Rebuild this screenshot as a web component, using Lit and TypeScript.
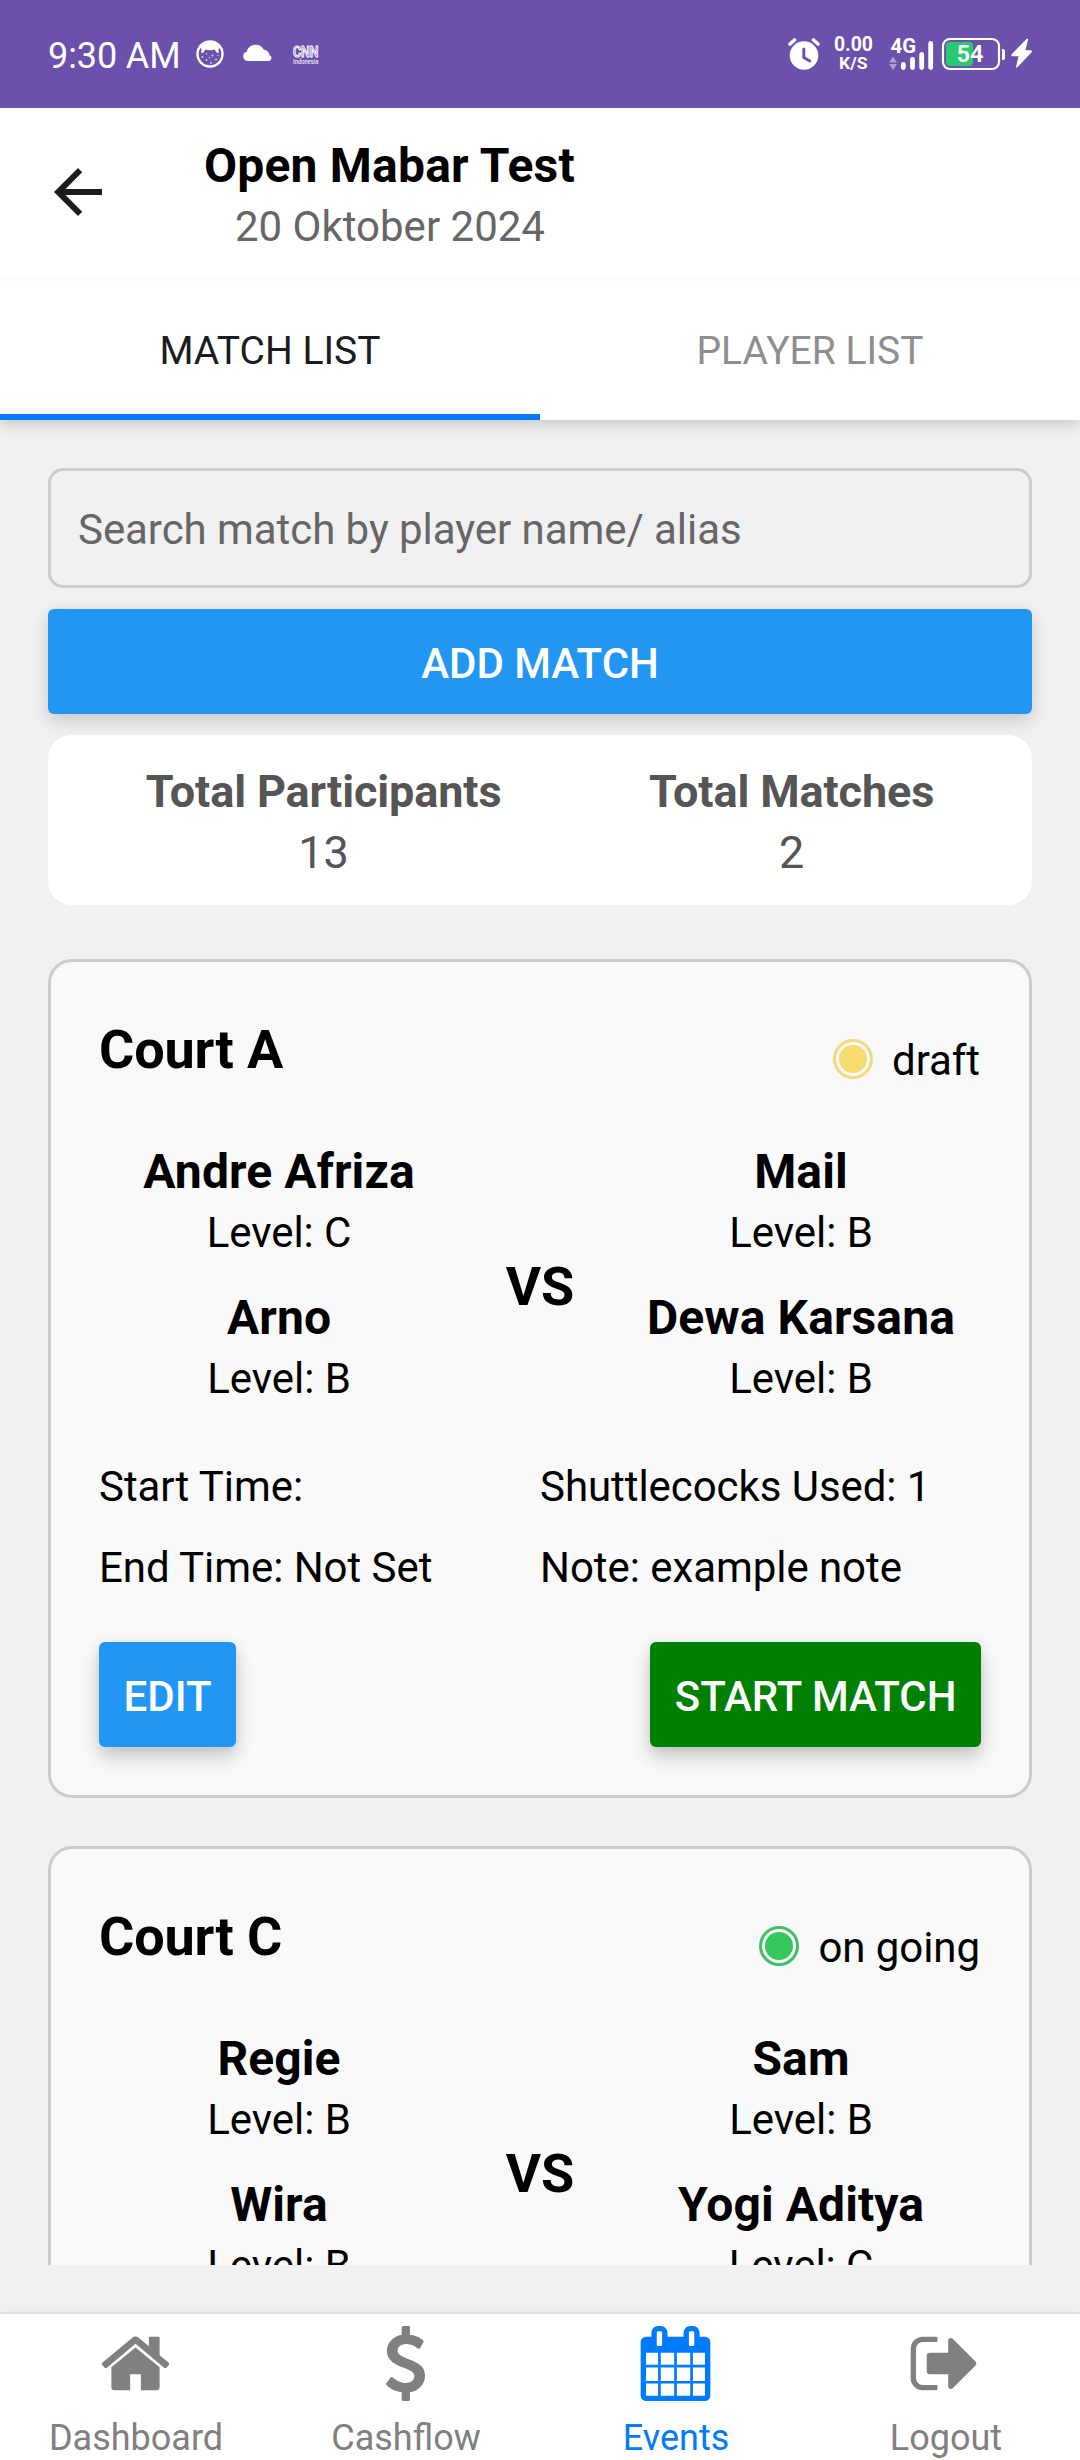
import { LitElement, html, css, svg, nothing } from "lit";
import { customElement, property } from "lit/decorators.js";
import { classMap } from "lit/directives/class-map.js";

interface Player {
  name: string;
  level: string;
}

interface Details {
  start: string;
  end: string;
  shuttlecocks: number;
  note: string;
}

interface Match {
  court: string;
  status: string;
  tone: "draft" | "ongoing";
  left: Player[];
  right: Player[];
  details?: Details;
}

const MATCHES: Match[] = [
  {
    court: "Court A",
    status: "draft",
    tone: "draft",
    left: [{ name: "Andre Afriza", level: "C" }, { name: "Arno", level: "B" }],
    right: [{ name: "Mail", level: "B" }, { name: "Dewa Karsana", level: "B" }],
    details: { start: "", end: "Not Set", shuttlecocks: 1, note: "example note" },
  },
  {
    court: "Court C",
    status: "on going",
    tone: "ongoing",
    left: [{ name: "Regie", level: "B" }, { name: "Wira", level: "B" }],
    right: [{ name: "Sam", level: "B" }, { name: "Yogi Aditya", level: "C" }],
  },
];

const NAV_ICONS: Record<string, string> = {
  home: "M1472 992v480q0 26-19 45t-45 19h-384v-384h-256v384h-384q-26 0-45-19t-19-45v-480q0-1 .5-3t.5-3l575-474 575 474q1 2 1 6zm223-69l-62 74q-8 9-21 11h-3q-13 0-21-7l-692-577-692 577q-12 8-24 7-13-2-21-11l-62-74q-8-10-7-23.5t11-21.5l719-599q32-26 76-26t76 26l244 204v-195q0-14 9-23t23-9h192q14 0 23 9t9 23v408l219 182q10 8 11 21.5t-7 23.5z",
  dollar: "M1362 1185q0 153-99.5 263.5t-258.5 136.5v175q0 14-9 23t-23 9h-135q-13 0-22.5-9.5t-9.5-22.5v-175q-66-9-127.5-31t-101.5-44.5-74-48-46.5-37.5-17.5-18q-17-21-2-41l103-135q7-10 23-12 15-2 24 9l2 2q113 99 243 125 37 8 74 8 81 0 142.5-43t61.5-122q0-28-15-53t-33.5-42-58.5-37.5-66-32-80-32.5q-39-16-61.5-25t-61.5-26.5-62.5-31-56.5-35.5-53.5-42.5-43.5-49-35.5-58-21-66.5-8.5-78q0-138 98-242t255-134v-180q0-13 9.5-22.5t22.5-9.5h135q14 0 23 9t9 23v176q57 6 110.5 23t87 33.5 63.5 37.5 39 29 15 14q17 18 5 38l-81 146q-8 15-23 16-14 3-27-7-3-3-14.5-12t-39-26.5-58.5-32-74.5-26-85.5-11.5q-95 0-155 43t-60 111q0 26 8.5 48t29.5 41.5 39.5 33 56 31 60.5 27 70 27.5q53 20 81 31.5t76 35 75.5 42.5 62 50 53 63.5 31.5 76.5 13 94z",
  calendar: "M192 1664h288v-288h-288v288zm352 0h320v-288h-320v288zm-352-352h288v-320h-288v320zm352 0h320v-320h-320v320zm-352-384h288v-288h-288v288zm736 736h320v-288h-320v288zm-384-736h320v-288h-320v288zm768 736h288v-288h-288v288zm-384-352h320v-320h-320v320zm-352-864v-288q0-13-9.5-22.5t-22.5-9.5h-64q-13 0-22.5 9.5t-9.5 22.5v288q0 13 9.5 22.5t22.5 9.5h64q13 0 22.5-9.5t9.5-22.5zm736 864h288v-320h-288v320zm-384-384h320v-288h-320v288zm384 0h288v-288h-288v288zm32-480v-288q0-13-9.5-22.5t-22.5-9.5h-64q-13 0-22.5 9.5t-9.5 22.5v288q0 13 9.5 22.5t22.5 9.5h64q13 0 22.5-9.5t9.5-22.5zm384-64v1280q0 52-38 90t-90 38h-1408q-52 0-90-38t-38-90v-1280q0-52 38-90t90-38h128v-96q0-66 47-113t113-47h64q66 0 113 47t47 113v96h384v-96q0-66 47-113t113-47h64q66 0 113 47t47 113v96h128q52 0 90 38t38 90z",
  signout: "M704 1440q0 4 1 20t.5 26.5-3 23.5-10 19.5-20.5 6.5h-320q-119 0-203.5-84.5t-84.5-203.5v-704q0-119 84.5-203.5t203.5-84.5h320q13 0 22.5 9.5t9.5 22.5q0 4 1 20t.5 26.5-3 23.5-10 19.5-20.5 6.5h-320q-66 0-113 47t-47 113v704q0 66 47 113t113 47h312l11.5 1 11.5 3 8 5.5 7 9 2 13.5zm928-544q0 26-19 45l-544 544q-19 19-45 19t-45-19-19-45v-288h-448q-26 0-45-19t-19-45v-384q0-26 19-45t45-19h448v-288q0-26 19-45t45-19 45 19l544 544q19 19 19 45z",
};

@customElement("status-bar")
class StatusBar extends LitElement {
  static styles = css`
    :host {
      display: flex;
      align-items: flex-start;
      justify-content: space-between;
      height: 108px;
      background: #6b51ab;
      color: #fff;
    }
    .side {
      display: flex;
      align-items: flex-start;
    }
    .clock {
      margin: 35px 0 0 48px;
      width: 142px;
      font-size: 36px;
      line-height: 42px;
      letter-spacing: -0.1px;
      white-space: nowrap;
    }
    svg {
      display: block;
      overflow: visible;
    }
    text {
      font-family: Roboto, sans-serif;
      fill: #fff;
    }
    .cnn {
      font-size: 15.500px;
      font-weight: 500;
      fill: #6b51ab;
      stroke: #fff;
      stroke-width: 1.1px;
    }
    .indo {
      font-size: 6.6px;
      font-weight: 500;
      opacity: 0.85;
    }
    .rate {
      font-size: 20.500px;
      font-weight: 700;
    }
    .unit {
      font-size: 17px;
      font-weight: 700;
    }
    .net {
      font-size: 21px;
      font-weight: 700;
    }
    .level {
      font-size: 23.500px;
      font-weight: 600;
    }
  `;

  render() {
    return html`
      <div class="side">
        <span class="clock">9:30 AM</span>
        <svg width="140" height="108" viewBox="190 0 140 108">
          <circle cx="210" cy="54" r="12.5" fill="none" stroke="#fff" stroke-width="2.4" />
          <path d="M199.500 47Q203 41 210 41T220.500 47L218.500 49L218.800 53L216.500 52.500L214.500 49.500Q210 51 205.500 49.500L203.500 52.500L201.200 53L201.500 49Z" fill="#fff" />
          <g fill="#fff" opacity=".75">
            <circle cx="202.500" cy="57" r=".9" /><circle cx="206.500" cy="60" r=".9" />
            <circle cx="212.500" cy="55.500" r=".9" /><circle cx="216" cy="59.500" r=".9" />
            <circle cx="211" cy="63" r=".9" /><circle cx="206.500" cy="54" r=".7" />
            <circle cx="218" cy="55.500" r=".7" /><circle cx="209.500" cy="57.500" r=".7" />
          </g>
          <path d="M247.500 61a4.700 4.700 0 0 1-.8-9.200a9.200 9.200 0 0 1 17.200-2a6.400 6.400 0 0 1 5.600 5.400a3 3 0 0 1-.4 5.800z" fill="#fff" />
          <text class="cnn" x="293" y="56.800" textLength="25.5" lengthAdjust="spacingAndGlyphs">CNN</text>
          <text class="indo" x="293" y="63.800" textLength="25.5" lengthAdjust="spacingAndGlyphs">Indonesia</text>
        </svg>
      </div>
      <svg width="300" height="108" viewBox="780 0 300 108">
        <g>
          <circle cx="804" cy="55.500" r="14.300" fill="#fff" />
          <path d="M790 44l4.500-4M818 44l-4.500-4" stroke="#fff" stroke-width="3.600" stroke-linecap="round" />
          <path d="M803.800 49v8.500l6 3.500" fill="none" stroke="#6b51ab" stroke-width="3" stroke-linecap="round" stroke-linejoin="round" />
        </g>
        <text class="rate" x="834" y="51" textLength="39" lengthAdjust="spacingAndGlyphs">0.00</text>
        <text class="unit" x="839" y="69" textLength="28.5" lengthAdjust="spacingAndGlyphs">K/S</text>
        <text class="net" x="890.500" y="53" textLength="25.5" lengthAdjust="spacingAndGlyphs">4G</text>
        <path d="M893 56.500l4 6h-8zM893 70l4-6h-8z" fill="#fff" opacity=".45" />
        <path d="M903.300 64.500v3M912.500 59.500v8M921.700 54.500v13M930.700 43.500v24" stroke="#fff" stroke-width="4.800" stroke-linecap="round" />
        <rect x="943" y="39" width="56" height="30" rx="7" fill="none" stroke="#fff" stroke-width="2.200" />
        <rect x="946" y="42" width="27" height="24" rx="4" fill="#2cca6e" />
        <text class="level" x="956.500" y="62">54</text>
        <path d="M1002 49q3 0 3 2v7q0 2-3 2z" fill="#fff" />
        <path d="M1027 38.500L1011.500 54.500q-.8 1.500 1 1.800h6L1016 67l1 .8L1031.800 52q.6-1.600-1-1.800h-5.300L1028.200 39z" fill="#fff" />
      </svg>
    `;
  }
}

@customElement("match-card")
class MatchCard extends LitElement {
  @property({ attribute: false }) match!: Match;

  static styles = css`
    :host {
      display: block;
      box-sizing: border-box;
      flex: none;
      height: 839px;
      padding: 48px;
      border: 3px solid #ccc;
      border-radius: 24px;
      background: #f9f9f9;
      color: #000;
      font-size: 42px;
      line-height: 57px;
      letter-spacing: -0.06px;
    }
    .head {
      display: flex;
      justify-content: space-between;
      align-items: flex-start;
      height: 129px;
    }
    .court {
      padding-top: 4px;
      font-size: 54px;
      line-height: 72px;
      font-weight: 700;
      letter-spacing: -0.15px;
    }
    .status {
      display: flex;
      align-items: center;
      gap: 19px;
      padding: 22px 1px 0 0;
    }
    .dot {
      box-sizing: border-box;
      width: 40px;
      height: 40px;
      margin-top: -3px;
      padding: 3px;
      border: 3.500px solid #f1db81;
      border-radius: 50%;
      background-clip: content-box;
      background-color: #f6db6e;
    }
    .dot.ongoing {
      border-color: #41c065;
      background-color: #34c759;
    }
    .teams {
      display: grid;
      grid-template-columns: 360px 162px 360px;
      align-items: center;
      height: 292px;
      text-align: center;
    }
    .player {
      height: 146px;
      white-space: nowrap;
    }
    .name {
      font-size: 48px;
      line-height: 65px;
      font-weight: 700;
      letter-spacing: 0.1px;
    }
    .level {
      line-height: 57px;
    }
    .vs {
      padding-top: 3px;
      font-size: 54px;
      line-height: 72px;
      font-weight: 700;
      letter-spacing: 0;
    }
    .info {
      display: grid;
      grid-template-columns: 1fr 1fr;
      row-gap: 24px;
      padding-top: 27px;
      white-space: nowrap;
    }
    .actions {
      display: flex;
      justify-content: space-between;
      padding-top: 46px;
    }
    .btn {
      height: 105px;
      padding: 0 24.500px;
      border-radius: 6px;
      background: #2196f3;
      color: #fff;
      font-weight: 500;
      line-height: 110px;
      letter-spacing: 0;
      box-shadow: 0 10px 18px rgba(0, 0, 0, 0.2), 0 0 12px rgba(0, 0, 0, 0.05);
    }
    .start {
      background: #008000;
    }
  `;

  private team(players: Player[]) {
    return html`<div>
      ${players.map(
        (p) => html`<div class="player">
          <div class="name">${p.name}</div>
          <div class="level">Level: ${p.level}</div>
        </div>`
      )}
    </div>`;
  }

  private details(d: Details) {
    return html`
      <div class="info">
        <span>Start Time: ${d.start}</span>
        <span>Shuttlecocks Used: ${d.shuttlecocks}</span>
        <span>End Time: ${d.end}</span>
        <span>Note: ${d.note}</span>
      </div>
      <div class="actions">
        <div class="btn">EDIT</div>
        <div class="btn start">START MATCH</div>
      </div>
    `;
  }

  render() {
    const m = this.match;
    return html`
      <div class="head">
        <div class="court">${m.court}</div>
        <div class="status">
          <span class=${classMap({ dot: true, ongoing: m.tone === "ongoing" })}></span>
          <span>${m.status}</span>
        </div>
      </div>
      <div class="teams">
        ${this.team(m.left)}
        <div class="vs">VS</div>
        ${this.team(m.right)}
      </div>
      ${m.details ? this.details(m.details) : nothing}
    `;
  }
}

@customElement("bottom-nav")
class BottomNav extends LitElement {
  static styles = css`
    :host {
      display: grid;
      grid-template-columns: repeat(4, 1fr);
      box-sizing: border-box;
      height: 148px;
      border-top: 2px solid #e0e0e0;
      background: #fff;
      color: #808080;
      box-shadow: 0 -2px 12px rgba(0, 0, 0, 0.03);
    }
    .item {
      display: flex;
      flex-direction: column;
      align-items: center;
      padding-top: 11.500px;
      font-size: 36px;
      line-height: 42px;
    }
    .item span {
      padding-left: 2px;
    }
    .active {
      color: #007aff;
    }
    svg {
      width: 75px;
      height: 75px;
      margin-bottom: 16.500px;
      fill: currentColor;
    }
  `;

  private items = [
    ["home", "Dashboard"],
    ["dollar", "Cashflow"],
    ["calendar", "Events"],
    ["signout", "Logout"],
  ];

  render() {
    return this.items.map(
      ([icon, label]) => html`<div class=${classMap({ item: true, active: label === "Events" })}>
        <svg viewBox="0 0 1792 1792">${svg`<path d=${NAV_ICONS[icon]} />`}</svg>
        <span>${label}</span>
      </div>`
    );
  }
}

@customElement("app-root")
class AppRoot extends LitElement {
  static styles = css`
    :host {
      display: flex;
      flex-direction: column;
      width: 1080px;
      height: 2460px;
      overflow: hidden;
      background: #f1f1f1;
      font-family: Roboto, sans-serif;
      font-size: 42px;
    }
    .header {
      position: relative;
      z-index: 2;
      display: flex;
      height: 168px;
      background: #fff;
    }
    .back {
      width: 72px;
      height: 72px;
      margin: 48px 0 0 42px;
      fill: #1c1b1f;
    }
    .titles {
      margin: 26px 0 0 90px;
      text-align: center;
    }
    .title {
      font-size: 48px;
      line-height: 63px;
      font-weight: 700;
      letter-spacing: 0.2px;
      color: #000;
    }
    .date {
      padding: 1px 0 0 1px;
      line-height: 58px;
      color: #666;
    }
    .tabs {
      position: relative;
      z-index: 1;
      display: grid;
      grid-template-columns: 1fr 1fr;
      height: 144px;
      background: linear-gradient(#fbfbfb, #fff 12px);
      box-shadow: 0 3px 15px rgba(0, 0, 0, 0.2);
    }
    .tab {
      box-sizing: border-box;
      height: 144px;
      padding-top: 51px;
      text-align: center;
      font-size: 39px;
      line-height: 48px;
      color: #8e8e8e;
    }
    .tab.active {
      border-bottom: 6px solid #007aff;
      color: #1c1b1f;
    }
    .content {
      display: flex;
      flex-direction: column;
      height: 1797px;
      padding: 48px 48px 0;
      overflow: hidden;
      flex: none;
      box-sizing: content-box;
    }
    .search {
      box-sizing: border-box;
      flex: none;
      height: 120px;
      padding: 30px 27px 0;
      border: 3px solid #ccc;
      border-radius: 15px;
      line-height: 57px;
      letter-spacing: -0.06px;
      color: #666;
    }
    .add {
      flex: none;
      height: 105px;
      margin-top: 21px;
      border-radius: 6px;
      background: #2196f3;
      color: #fff;
      text-align: center;
      font-weight: 500;
      line-height: 110px;
      box-shadow: 0 8px 18px rgba(0, 0, 0, 0.14), 0 0 12px rgba(0, 0, 0, 0.05);
    }
    .stats {
      position: relative;
      display: flex;
      justify-content: space-around;
      box-sizing: border-box;
      flex: none;
      height: 170px;
      margin: 21px 0 54px;
      padding: 26px 24px 22px;
      border-radius: 24px;
      background: #fff;
      color: #555;
      text-align: center;
      font-size: 45px;
      line-height: 61px;
    }
    .stats strong {
      display: block;
      font-weight: 700;
      letter-spacing: -0.12px;
    }
    match-card {
      margin-bottom: 48px;
    }
    bottom-nav {
      margin-top: 47px;
      flex: none;
    }
  `;

  render() {
    return html`
      <status-bar></status-bar>
      <div class="header">
        <svg class="back" viewBox="0 0 24 24">
          <path d="M20 11H7.830l5.590-5.590L12 4l-8 8 8 8 1.410-1.410L7.830 13H20z" />
        </svg>
        <div class="titles">
          <div class="title">Open Mabar Test</div>
          <div class="date">20 Oktober 2024</div>
        </div>
      </div>
      <div class="tabs">
        <div class="tab active">MATCH LIST</div>
        <div class="tab">PLAYER LIST</div>
      </div>
      <div class="content">
        <div class="search">Search match by player name/ alias</div>
        <div class="add">ADD MATCH</div>
        <div class="stats">
          <div><strong>Total Participants</strong>13</div>
          <div><strong>Total Matches</strong>2</div>
        </div>
        ${MATCHES.map((m) => html`<match-card .match=${m}></match-card>`)}
      </div>
      <bottom-nav></bottom-nav>
    `;
  }
}
